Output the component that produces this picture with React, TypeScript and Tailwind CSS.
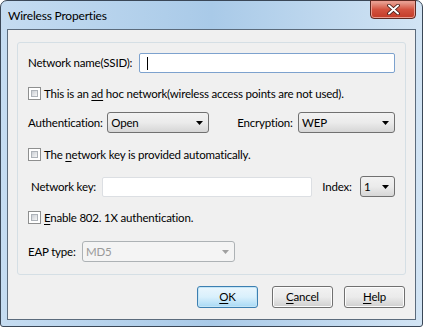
import React from 'react'

const font = "font-['Lato','Noto_Sans',sans-serif]"

function Check({ children }: { children: React.ReactNode }) {
  return (
    <div className="flex items-center h-[13px]">
      <span className="w-[13px] h-[13px] border border-[#8e8f8f] bg-white p-[2px] shrink-0">
        <span className="block w-full h-full border border-[#aeb3b9] bg-gradient-to-br from-[#cbcfd5] to-[#f6f6f6]" />
      </span>
      <span className="ml-[3px] leading-none whitespace-nowrap">{children}</span>
    </div>
  )
}

function Select({ value, className, disabled }: { value: string; className: string; disabled?: boolean }) {
  return (
    <div
      className={`flex items-center h-[21px] rounded-[3px] border pl-[3px] pr-[5px] shrink-0 ${
        disabled
          ? 'border-[#adb2b5] bg-[#f4f4f4] text-[#9a9a9a]'
          : 'border-[#707070] bg-gradient-to-b from-[#f2f2f2] via-[#ebebeb] to-[#d6d6d6] text-black'
      } ${className}`}
    >
      <span className="flex-1 leading-none">{value}</span>
      <svg width="7" height="4" viewBox="0 0 7 4">
        <path d="M0 0h7L3.5 4z" fill={disabled ? '#a0a0a0' : '#000'} />
      </svg>
    </div>
  )
}

function Button({ label, u, primary, className }: { label: string; u: string; primary?: boolean; className?: string }) {
  const rest = label.slice(u.length)
  return (
    <div
      className={`w-[61px] h-[22px] rounded-[3px] border flex items-center justify-center ${
        primary
          ? 'border-[#3c7fb1] bg-gradient-to-b from-[#eaf6fd] via-[#d9f0fc] to-[#a7d9f5] shadow-[inset_0_0_0_1px_#c4e5f6]'
          : 'border-[#707070] bg-gradient-to-b from-[#f2f2f2] via-[#ebebeb] to-[#cfcfcf] shadow-[inset_0_0_0_1px_#fcfcfc]'
      } ${className ?? ''}`}
    >
      <span className="leading-none">
        <span className="underline underline-offset-2">{u}</span>
        {rest}
      </span>
    </div>
  )
}

export default function App() {
  return (
    <div className={`w-[423px] h-[327px] ${font} text-[11.5px] tracking-[-0.2px] text-black`}>
      <div className="w-full h-full flex flex-col rounded-t-[7px] rounded-b-[3px] border border-[#3a4757] bg-gradient-to-r from-[#c5dcf1] via-[#a9cae8] to-[#d2e4f4] px-[6px] pb-[6px]">
        <div className="h-[28px] flex items-start">
          <span className="mt-[8px] ml-[1px] text-[12px] leading-[14px]">Wireless Properties</span>
          <div className="ml-auto w-[46px] h-[19px] -mt-[1px] rounded-b-[4px] border border-[#5e2a22] bg-gradient-to-b from-[#e9a99d] via-[#d3523f] to-[#c23b27] flex items-center justify-center shadow-[inset_0_0_0_1px_#eb9c8f]">
            <svg width="13" height="11" viewBox="0 0 13 11">
              <path d="M2 1.5l9 8M11 1.5l-9 8" stroke="#3b1510" strokeWidth="3.6" strokeLinecap="round" />
              <path d="M2 1.5l9 8M11 1.5l-9 8" stroke="#fff" strokeWidth="2" strokeLinecap="round" />
            </svg>
          </div>
        </div>
        <div className="flex-1 flex flex-col border border-[#5b6b7c] bg-[#f0f0f0] px-[9px] pt-[12px]">
          <div className="h-[233px] flex flex-col rounded-[3px] border border-[#d5dfe5] px-[10px] pt-[10px]">
            <div className="flex items-center h-[20px]">
              <span className="w-[111px] whitespace-nowrap">Network name(SSID):</span>
              <div className="flex-1 h-[20px] border border-[#7da2ce] rounded-[2px] bg-white flex items-center pl-[7px]">
                <span className="w-px h-[13px] bg-black" />
              </div>
            </div>
            <div className="mt-[14px]">
              <Check>
                This is an <span className="underline underline-offset-2">ad</span> hoc network(wireless access points are not used).
              </Check>
            </div>
            <div className="mt-[12px] flex items-center">
              <span className="w-[81px] whitespace-nowrap">Authentication:</span>
              <Select value="Open" className="w-[102px]" />
              <span className="ml-[28px] w-[62px] whitespace-nowrap">Encryption:</span>
              <Select value="WEP" className="w-[97px]" />
            </div>
            <div className="mt-[15px]">
              <Check>
                The <span className="underline underline-offset-2">n</span>etwork key is provided automatically.
              </Check>
            </div>
            <div className="mt-[15px] flex items-center h-[21px] pl-[3px]">
              <span className="w-[71px] whitespace-nowrap">Network key:</span>
              <div className="w-[212px] h-[20px] border border-[#dcdfe3] rounded-[2px] bg-white" />
              <span className="ml-[10px] w-[38px] whitespace-nowrap">Index:</span>
              <Select value="1" className="w-[35px]" />
            </div>
            <div className="mt-[14px]">
              <Check>
                <span className="underline underline-offset-2">E</span>nable 802. 1X authentication.
              </Check>
            </div>
            <div className="mt-[17px] flex items-center">
              <span className="w-[54px] whitespace-nowrap">EAP type:</span>
              <Select value="MD5" className="w-[153px]" disabled />
            </div>
          </div>
          <div className="mt-[11px] flex justify-end pr-[1px]">
            <Button label="OK" u="O" primary />
            <Button label="Cancel" u="C" className="ml-[14px]" />
            <Button label="Help" u="H" className="ml-[11px]" />
          </div>
        </div>
      </div>
    </div>
  )
}
